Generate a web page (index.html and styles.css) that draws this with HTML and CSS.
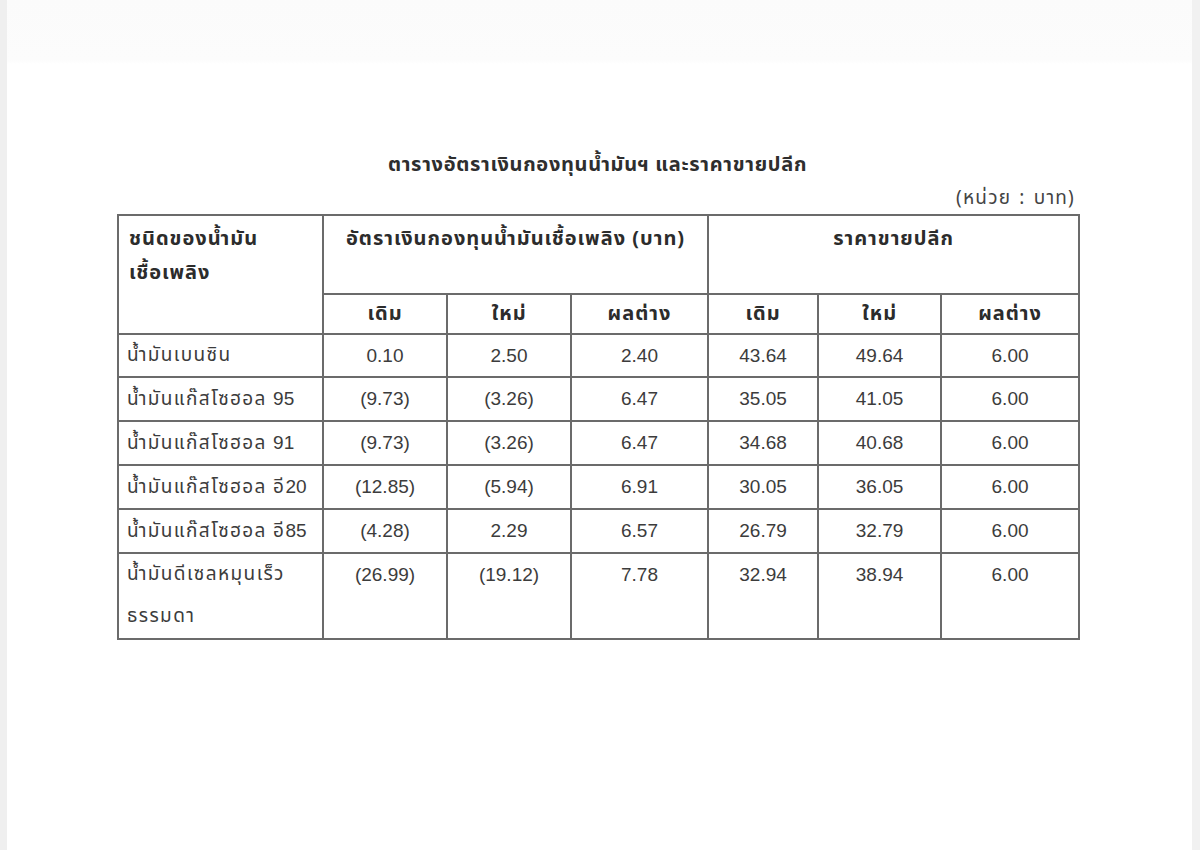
FILE: index.html
```html
<!DOCTYPE html>
<html lang="th">
<head>
<meta charset="utf-8">
<title>ตารางอัตราเงินกองทุนน้ำมันฯ</title>
<link rel="stylesheet" href="styles.css">
</head>
<body>
<div class="page">
  <div class="sheet">
    <h1 class="title">ตารางอัตราเงินกองทุนน้ำมันฯ และราคาขายปลีก</h1>
    <div class="unit">(หน่วย : บาท)</div>
    <table class="fund">
      <colgroup>
        <col class="c-name"><col class="c1"><col class="c2"><col class="c3"><col class="c4"><col class="c5"><col class="c6">
      </colgroup>
      <thead>
        <tr class="h1">
          <th rowspan="2" class="name-h">ชนิดของน้ำมัน<br>เชื้อเพลิง</th>
          <th colspan="3">อัตราเงินกองทุนน้ำมันเชื้อเพลิง (บาท)</th>
          <th colspan="3">ราคาขายปลีก</th>
        </tr>
        <tr class="h2">
          <th>เดิม</th><th>ใหม่</th><th>ผลต่าง</th>
          <th>เดิม</th><th>ใหม่</th><th>ผลต่าง</th>
        </tr>
      </thead>
      <tbody>
        <tr><td class="name">น้ำมันเบนซิน</td><td>0.10</td><td>2.50</td><td>2.40</td><td>43.64</td><td>49.64</td><td>6.00</td></tr>
        <tr><td class="name">น้ำมันแก๊สโซฮอล <span class="num">95</span></td><td>(9.73)</td><td>(3.26)</td><td>6.47</td><td>35.05</td><td>41.05</td><td>6.00</td></tr>
        <tr><td class="name">น้ำมันแก๊สโซฮอล <span class="num">91</span></td><td>(9.73)</td><td>(3.26)</td><td>6.47</td><td>34.68</td><td>40.68</td><td>6.00</td></tr>
        <tr><td class="name">น้ำมันแก๊สโซฮอล อี<span class="num">20</span></td><td>(12.85)</td><td>(5.94)</td><td>6.91</td><td>30.05</td><td>36.05</td><td>6.00</td></tr>
        <tr><td class="name">น้ำมันแก๊สโซฮอล อี<span class="num">85</span></td><td>(4.28)</td><td>2.29</td><td>6.57</td><td>26.79</td><td>32.79</td><td>6.00</td></tr>
        <tr class="tall"><td class="name">น้ำมันดีเซลหมุนเร็ว<br>ธรรมดา</td><td>(26.99)</td><td>(19.12)</td><td>7.78</td><td>32.94</td><td>38.94</td><td>6.00</td></tr>
      </tbody>
    </table>
  </div>
</div>
</body>
</html>
```
FILE: styles.css
```css
html, body {
  margin: 0;
  padding: 0;
  background: #ffffff;
}
body {
  font-family: "Noto Sans Thai", "Loma", "Garuda", "Tlwg Typo", "Liberation Sans", sans-serif;
  color: #333333;
}
.page {
  width: 1200px;
  height: 850px;
  box-sizing: border-box;
  border-left: 7px solid #efefef;
  border-right: 8px solid #f1f1f1;
  background: linear-gradient(#fbfbfb 0, #fcfcfc 60px, #ffffff 64px);
  overflow: hidden;
}
.sheet {
  padding: 147px 0 0 110px;
}
.title {
  margin: 0;
  width: 961px;
  text-align: center;
  font-size: 20px;
  letter-spacing: 0.7px;
  font-weight: bold;
  line-height: 36px;
  color: #2e2e2e;
}
.unit {
  width: 958px;
  text-align: right;
  font-size: 19px;
  letter-spacing: 1.2px;
  word-spacing: 2px;
  line-height: 28px;
  color: #444;
  margin-top: 2px;
}
.fund {
  border-collapse: collapse;
  table-layout: fixed;
  width: 961px;
  margin-top: 1px;
}
.c-name { width: 205px; }
.c1 { width: 124px; }
.c2 { width: 124px; }
.c3 { width: 137px; }
.c4 { width: 110px; }
.c5 { width: 123px; }
.c6 { width: 138px; }
.fund th, .fund td {
  border: 2px solid #6b6b6b;
  padding: 0;
  vertical-align: top;
  text-align: center;
}
.fund th {
  font-weight: bold;
  font-size: 20px;
  letter-spacing: 1px;
  color: #2c2c2c;
}
.h1 th {
  height: 79px;
  padding-top: 6px;
  line-height: 34px;
  box-sizing: border-box;
}
.h1 th.name-h {
  text-align: left;
  padding-left: 10px;
}
.h2 th {
  height: 38px;
  line-height: 38px;
}
.fund td {
  height: 41px;
  line-height: 41px;
  font-family: "Liberation Sans", Arial, sans-serif;
  font-size: 19px;
  color: #3c3c3c;
}
.fund td.name {
  text-align: left;
  padding-left: 8px;
  font-family: "Noto Sans Thai", "Loma", "Garuda", "Tlwg Typo", "Liberation Sans", sans-serif;
  font-size: 19px;
  letter-spacing: 1.4px;
  white-space: nowrap;
}
.tall td.name {
  line-height: 42px;
}
.num {
  font-family: "Liberation Sans", Arial, sans-serif;
  letter-spacing: 0;
}
.tall td {
  height: 84px;
}
```
